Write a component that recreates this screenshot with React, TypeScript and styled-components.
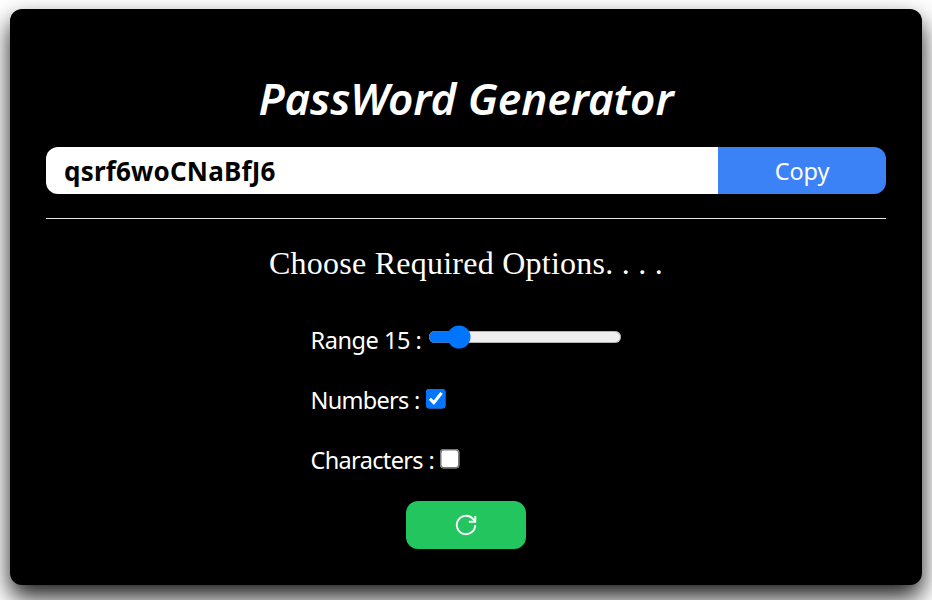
import React, { useState } from "react";
import styled, { createGlobalStyle } from "styled-components";

const Global = createGlobalStyle`
  *, *::before, *::after { box-sizing: border-box; }
  html, body { margin: 0; background: #fff; }
  body { height: 600px; overflow: hidden; font-family: "Noto Sans", sans-serif; }
`;

const Page = styled.main`
  height: 600px;
  padding: 9px 10px 15px;
`;

const Card = styled.section`
  height: 576px;
  padding: 56px 36px 36px;
  display: flex;
  flex-direction: column;
  background: #000;
  color: #fff;
  border-radius: 12px;
  box-shadow: 0 12px 24px rgba(0, 0, 0, 0.9);
`;

const Title = styled.h1`
  margin: 0;
  height: 66px;
  line-height: 66px;
  text-align: center;
  white-space: nowrap;
  font-size: 44px;
  font-weight: 600;
  font-style: italic;
  letter-spacing: -0.1px;
`;

const PasswordBar = styled.div`
  display: flex;
  height: 47px;
  margin-top: 16px;
  border-radius: 12px;
  overflow: hidden;
`;

const PasswordField = styled.input`
  flex: 1;
  min-width: 0;
  border: 0;
  outline: 0;
  padding: 0 18px;
  background: #fff;
  color: #000;
  font: 700 26px "Noto Sans", sans-serif;
  letter-spacing: 0.2px;
`;

const CopyButton = styled.button`
  width: 168px;
  border: 0;
  padding: 0;
  background: #3b82f6;
  color: #fff;
  font: 400 23.5px "Noto Sans", sans-serif;
  letter-spacing: -0.1px;
`;

const Divider = styled.hr`
  width: 100%;
  height: 1px;
  margin: 24px 0 0;
  border: 0;
  background: #e5e7eb;
`;

const Subtitle = styled.h2`
  margin: 23px 0 0;
  height: 42px;
  text-align: center;
  white-space: nowrap;
  font: 400 32px/42px "Liberation Serif", serif;
  letter-spacing: 0.25px;
`;

const Options = styled.div`
  display: flex;
  flex-direction: column;
  gap: 24px;
  margin: 38px 0 0 264.5px;
`;

const Option = styled.label`
  display: flex;
  align-items: center;
  height: 36px;
  white-space: nowrap;
`;

const Caption = styled.span<{ $width: number; $tracking: number }>`
  width: ${(p) => p.$width}px;
  flex: none;
  margin-top: -1px;
  font-size: 23.5px;
  line-height: 36px;
  letter-spacing: ${(p) => p.$tracking}px;
`;

const Range = styled.input`
  zoom: 1.5;
  width: 129px;
  height: 16px;
  margin: 0 0 4px;
  flex: none;
`;

const Check = styled.input`
  zoom: 1.5;
  width: 13.34px;
  height: 13.34px;
  margin: 0 0 1px;
  flex: none;
`;

const RefreshButton = styled.button`
  display: flex;
  align-items: center;
  justify-content: center;
  align-self: center;
  flex: none;
  width: 120px;
  height: 48px;
  margin-top: 23px;
  padding: 0;
  border: 0;
  border-radius: 12px;
  background: #22c55e;
  color: #fff;
`;

const RefreshIcon = () => (
  <svg width="24" height="24" viewBox="0 0 24 24" fill="none" stroke="currentColor" strokeWidth="1.9">
    <path d="M21.2 12a9.2 9.2 0 1 1-2.5-6.3L21 8" />
    <path d="M21.3 3v5.7H14.8" />
  </svg>
);

export default function App() {
  const [length, setLength] = useState(15);
  const [numbers, setNumbers] = useState(true);
  const [characters, setCharacters] = useState(false);
  return (
    <>
      <Global />
      <Page>
        <Card>
          <Title>PassWord Generator</Title>
          <PasswordBar>
            <PasswordField readOnly value="qsrf6woCNaBfJ6" />
            <CopyButton>Copy</CopyButton>
          </PasswordBar>
          <Divider />
          <Subtitle>Choose Required Options. . . .</Subtitle>
          <Options>
            <Option>
              <Caption $width={117.5} $tracking={-0.45}>Range {length} :</Caption>
              <Range type="range" min={8} max={70} value={length} onChange={(e) => setLength(+e.target.value)} />
            </Option>
            <Option>
              <Caption $width={115.5} $tracking={-0.7}>Numbers :</Caption>
              <Check type="checkbox" checked={numbers} onChange={(e) => setNumbers(e.target.checked)} />
            </Option>
            <Option>
              <Caption $width={129.5} $tracking={-0.65}>Characters :</Caption>
              <Check type="checkbox" checked={characters} onChange={(e) => setCharacters(e.target.checked)} />
            </Option>
          </Options>
          <RefreshButton aria-label="Generate">
            <RefreshIcon />
          </RefreshButton>
        </Card>
      </Page>
    </>
  );
}
